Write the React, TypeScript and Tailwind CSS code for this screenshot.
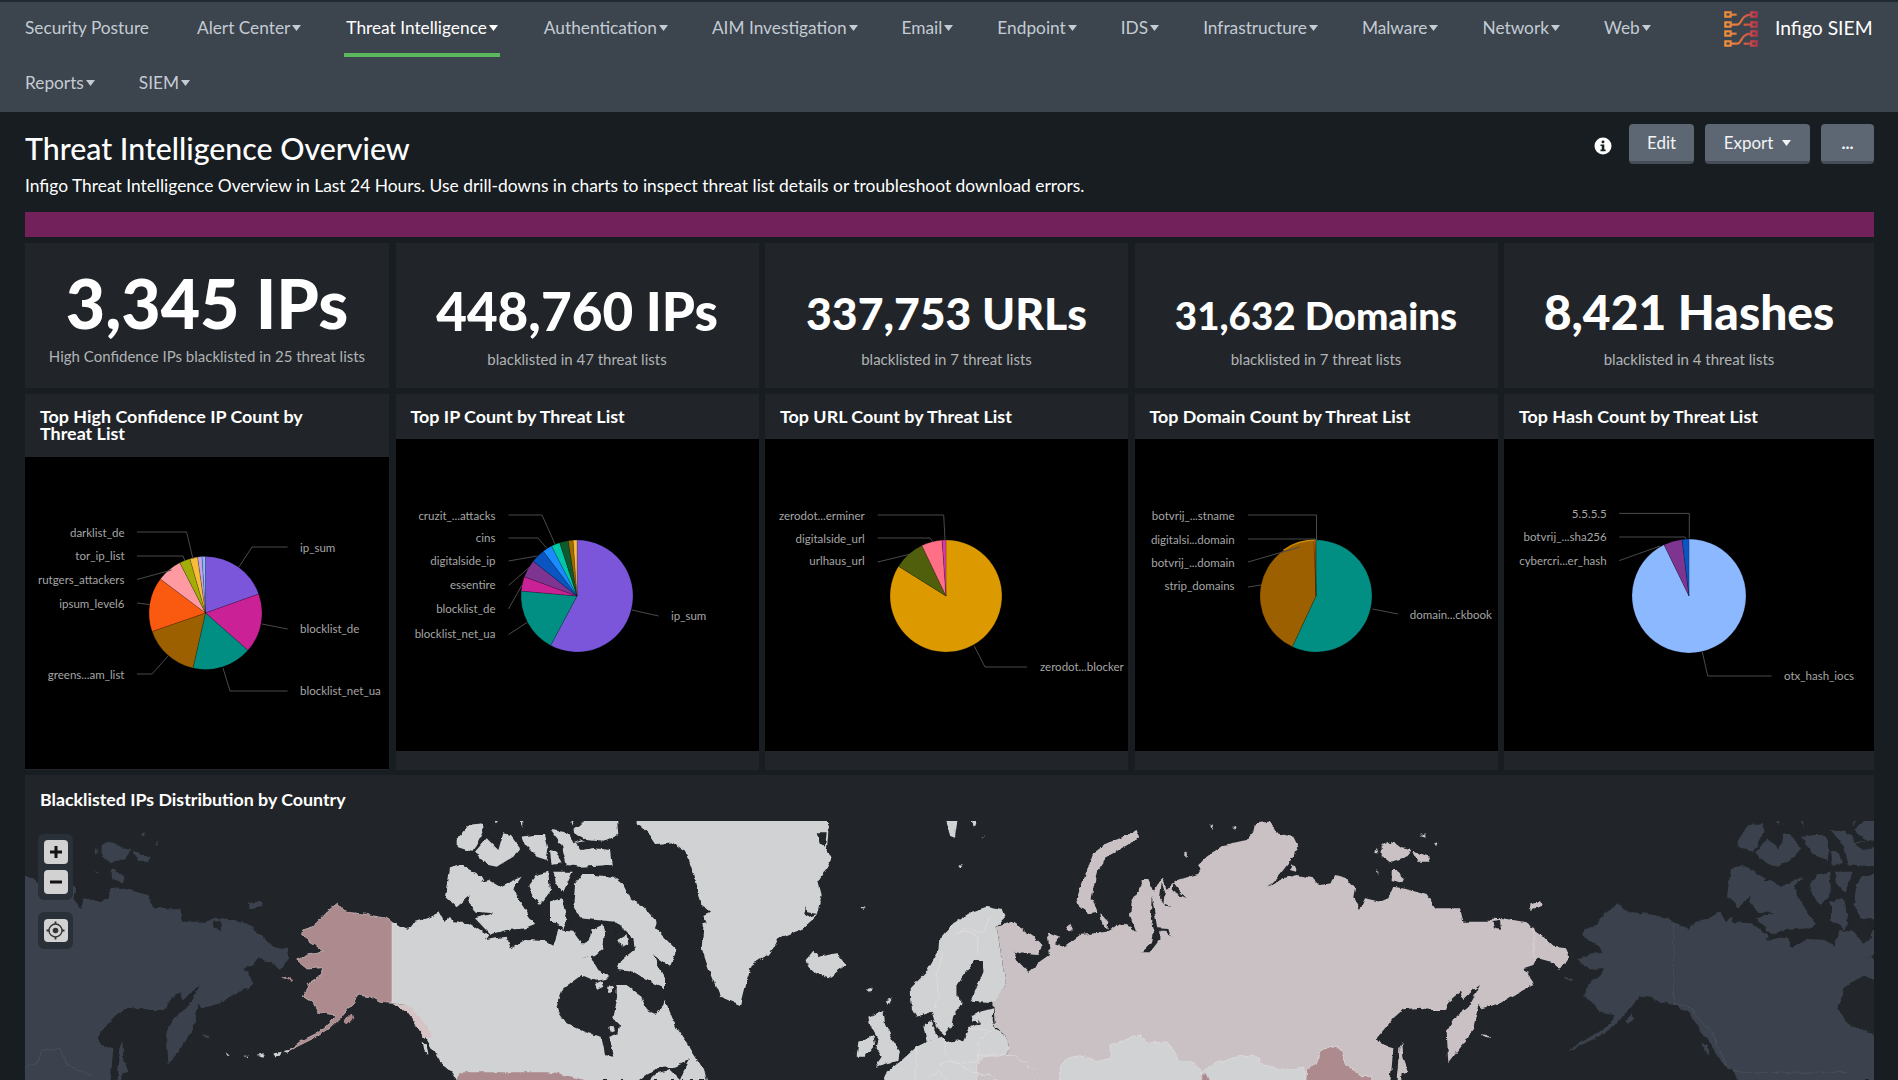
import React from "react";

const WATER = "#212529";
const PINK = "#ad8a8d";
const LIGHT = "#d1d2d3";
const RUS = "#c9c1c4";
const SLATE = "#3a434d";
const TEAL = "#008f82";

const navItems: { t: string; c?: boolean; a?: boolean }[] = [
  { t: "Security Posture" },
  { t: "Alert Center", c: true },
  { t: "Threat Intelligence", c: true, a: true },
  { t: "Authentication", c: true },
  { t: "AIM Investigation", c: true },
  { t: "Email", c: true },
  { t: "Endpoint", c: true },
  { t: "IDS", c: true },
  { t: "Infrastructure", c: true },
  { t: "Malware", c: true },
  { t: "Network", c: true },
  { t: "Web", c: true },
  { t: "Reports", c: true },
  { t: "SIEM", c: true },
];

function Caret({ cls = "" }: { cls?: string }) {
  return (
    <svg width="9" height="6" viewBox="0 0 9 6" className={cls}>
      <polygon points="0,0 9,0 4.5,6" fill="currentColor" />
    </svg>
  );
}

function Logo() {
  const rows = [0, 57];
  return (
    <svg width="36" height="38" viewBox="24 14 108 114">
      <defs>
        <linearGradient id="lg" gradientUnits="userSpaceOnUse" x1="30" y1="0" x2="126" y2="0">
          <stop offset="0" stopColor="#f0923a" />
          <stop offset="0.5" stopColor="#e0703f" />
          <stop offset="1" stopColor="#b8324f" />
        </linearGradient>
      </defs>
      {rows.map((d) => (
        <g key={d} transform={`translate(0 ${d})`} fill="none" stroke="url(#lg)" strokeWidth="6.5">
          <rect x="31" y="21" width="16" height="13" />
          <rect x="31" y="51" width="16" height="13" />
          <rect x="109" y="21" width="16" height="13" />
          <rect x="109" y="51" width="16" height="13" />
          <path d="M47 28 H65" />
          <path d="M47 58 H66 C82 58 76 28 109 28" />
          <path d="M86 58 H109" />
        </g>
      ))}
    </svg>
  );
}

function Nav() {
  return (
    <nav className="flex h-[112px] bg-[#3c444d] border-t-2 border-[#1f2a35]">
      <div className="flex flex-wrap content-start w-[1723px] pl-[3px]">
        {navItems.map((n) => (
          <div
            key={n.t}
            className={
              n.a
                ? "ml-[21px] mr-[22px] px-0.5 pt-[1px] h-[55px] flex items-center gap-[2px] text-[17.3px] text-white border-b-4 border-[#5cb85c]"
                : n.c
                  ? "mx-5 px-0.5 pt-[1px] h-[55px] flex items-center gap-[2px] text-[17.3px] text-[#c3cbd4] border-b-4 border-transparent"
                  : "ml-5 mr-6 px-0.5 pt-[1px] h-[55px] flex items-center gap-[2px] text-[17.3px] text-[#c3cbd4] border-b-4 border-transparent"
            }
          >
            <span>{n.t}</span>
            {n.c && <Caret />}
          </div>
        ))}
      </div>
      <div className="flex items-start pt-2 gap-4">
        <Logo />
        <span className="text-[19.3px] text-white mt-[4px] whitespace-nowrap">Infigo SIEM</span>
      </div>
    </nav>
  );
}

function Header() {
  return (
    <>
      <div className="flex justify-between pt-3 h-[52px]">
        <h1 className="text-[30.3px] font-medium text-white leading-[40px] pt-1">Threat Intelligence Overview</h1>
        <div className="flex items-start">
          <svg width="18" height="18" viewBox="0 0 18 18" className="mt-[13px] mr-[17px]">
            <circle cx="9" cy="9" r="8.5" fill="#fff" />
            <rect x="7.6" y="3.5" width="2.8" height="2.8" rx="1.2" fill="#171d21" />
            <path d="M6.5 7.5 H10.3 V12.6 H11.6 V14.2 H6.5 V12.6 H7.8 V9.1 H6.5 Z" fill="#171d21" />
          </svg>
          <button className="w-[65px] h-[40px] bg-[#5c6773] border-b-[3px] border-[#454d57] rounded-sm text-[17px] text-[#f2f4f5]">Edit</button>
          <button className="ml-[11px] w-[105px] h-[40px] bg-[#5c6773] border-b-[3px] border-[#454d57] rounded-sm text-[17px] text-[#f2f4f5] flex items-center justify-center gap-[9px]">
            Export <Caret />
          </button>
          <button className="ml-[11px] w-[53px] h-[40px] bg-[#5c6773] border-b-[3px] border-[#454d57] rounded-sm text-[17px] text-[#f2f4f5] font-bold">...</button>
        </div>
      </div>
      <p className="mt-[10px] text-[17.4px] leading-6 text-white whitespace-nowrap">
        Infigo Threat Intelligence Overview in Last 24 Hours. Use drill-downs in charts to inspect threat list details or troubleshoot download errors.
      </p>
      <div className="mt-[14px] h-[25px] bg-[#73215b]" />
    </>
  );
}

const kpis = [
  { n: "3,345 IPs", s: "High Confidence IPs blacklisted in 25 threat lists", c: "text-[68px] pt-[26px]", b: "pb-[22px]" },
  { n: "448,760 IPs", s: "blacklisted in 47 threat lists", c: "text-[53px] pt-[41px]", b: "pb-[19px]" },
  { n: "337,753 URLs", s: "blacklisted in 7 threat lists", c: "text-[44.5px] pt-[48px]", b: "pb-[19px]" },
  { n: "31,632 Domains", s: "blacklisted in 7 threat lists", c: "text-[38.5px] pt-[53px]", b: "pb-[19px]" },
  { n: "8,421 Hashes", s: "blacklisted in 4 threat lists", c: "text-[48px] pt-[45px]", b: "pb-[19px]" },
];

function arc(cx: number, cy: number, r: number, a0: number, a1: number) {
  const p = (a: number) => {
    const t = (a * Math.PI) / 180;
    return `${(cx + r * Math.sin(t)).toFixed(2)} ${(cy - r * Math.cos(t)).toFixed(2)}`;
  };
  return `M${cx} ${cy} L${p(a0)} A${r} ${r} 0 ${a1 - a0 > 180 ? 1 : 0} 1 ${p(a1)} Z`;
}

type Label = { t: string; x: number; y: number; a: "start" | "end" };
type Chart = {
  title: string;
  hdr: string;
  box: [number, number, number, number];
  c: [number, number, number];
  s: [number, string][];
  l: Label[];
  k: string[];
  extra?: boolean;
};

const charts: Chart[] = [
  {
    title: "Top High Confidence IP Count by Threat List",
    hdr: "h-[63px]",
    box: [25, 457, 364, 312],
    c: [205.5, 613, 56.5],
    s: [
      [70.3, "#7b56db"], [131.4, "#cb2196"], [192.8, TEAL], [251, "#9c6000"], [307, "#fa5a0f"],
      [333, "#ff9aa2"], [344, "#a4ad07"], [352, "#f7bc38"], [356.5, "#c1a4ea"], [360, "#8cb8ff"],
    ],
    l: [
      { t: "darklist_de", x: 124.5, y: 533, a: "end" },
      { t: "tor_ip_list", x: 124.5, y: 555.5, a: "end" },
      { t: "rutgers_attackers", x: 124.5, y: 579.5, a: "end" },
      { t: "ipsum_level6", x: 124.5, y: 603.5, a: "end" },
      { t: "greens...am_list", x: 124.5, y: 674.5, a: "end" },
      { t: "ip_sum", x: 300, y: 547.5, a: "start" },
      { t: "blocklist_de", x: 300, y: 628.5, a: "start" },
      { t: "blocklist_net_ua", x: 300, y: 690.5, a: "start" },
    ],
    k: [
      "137,532 186.6,532 193,559", "137,556 183,556 185,561", "137,579.5 171.6,570", "137,603 150,604.6",
      "137,674 152,674 168,656", "287.6,547 252,547 239,567", "287.6,629 262,624", "287.6,691 230,691 223,668",
    ],
  },
  {
    title: "Top IP Count by Threat List",
    hdr: "h-[45px]",
    box: [395, 439, 363, 312],
    c: [576, 596, 56],
    s: [
      [208, "#7b56db"], [275, TEAL], [290, "#cb2196"], [308.5, "#7e3592"], [323, "#0a55c0"],
      [333, "#1a8cff"], [342, "#00c8a8"], [351, "#0e5a2f"], [356, "#a36a00"], [360, "#f7bc38"],
    ],
    l: [
      { t: "cruzit_...attacks", x: 494.5, y: 515.5, a: "end" },
      { t: "cins", x: 494.5, y: 537.5, a: "end" },
      { t: "digitalside_ip", x: 494.5, y: 561, a: "end" },
      { t: "essentire", x: 494.5, y: 585, a: "end" },
      { t: "blocklist_de", x: 494.5, y: 609, a: "end" },
      { t: "blocklist_net_ua", x: 494.5, y: 634, a: "end" },
      { t: "ip_sum", x: 670, y: 615.7, a: "start" },
    ],
    k: [
      "507.5,515 541,515 554,544", "507.5,538 537,538 546,548.5", "507.5,561 536,556", "507.5,585.5 528,567.5",
      "507.5,609 521,585", "507.5,634.6 526,622.5", "657.7,616 631,610",
    ],
  },
  {
    title: "Top URL Count by Threat List",
    hdr: "h-[45px]",
    box: [765, 439, 363, 312],
    c: [946, 596, 56],
    s: [[302, "#dc9a00"], [334.5, "#4f5f0b"], [356, "#ff6f85"], [360, "#d63aa6"]],
    l: [
      { t: "zerodot...erminer", x: 864.8, y: 515.5, a: "end" },
      { t: "digitalside_url", x: 864.8, y: 538.5, a: "end" },
      { t: "urlhaus_url", x: 864.8, y: 561, a: "end" },
      { t: "zerodot...blocker", x: 1040, y: 666.6, a: "start" },
    ],
    k: ["877.7,515 943.7,515 945,540", "877.7,538 930,538 933,542", "877.7,562 910.7,554", "1027,667 985,667 974,645.6"],
  },
  {
    title: "Top Domain Count by Threat List",
    hdr: "h-[45px]",
    box: [1135, 439, 363, 312],
    c: [1316, 596, 56],
    s: [[205, TEAL], [358, "#9c6000"], [359, "#dc9a00"], [360, "#cc4a1a"]],
    l: [
      { t: "botvrij_...stname", x: 1234.6, y: 515.5, a: "end" },
      { t: "digitalsi...domain", x: 1234.6, y: 539.6, a: "end" },
      { t: "botvrij_...domain", x: 1234.6, y: 563, a: "end" },
      { t: "strip_domains", x: 1234.6, y: 586.4, a: "end" },
      { t: "domain...ckbook", x: 1409.8, y: 614.6, a: "start" },
    ],
    k: ["1248,515 1316.5,515 1316.5,540", "1248,539 1315,539 1315,541", "1248,562 1300,547", "1248,587 1261,585", "1398,614 1372.5,609"],
    extra: true,
  },
  {
    title: "Top Hash Count by Threat List",
    hdr: "h-[45px]",
    box: [1504, 439, 370, 312],
    c: [1689, 596, 57],
    s: [[334, "#8cb8ff"], [353, "#7e3592"], [360, "#0a55c0"]],
    l: [
      { t: "5.5.5.5", x: 1606.7, y: 514.4, a: "end" },
      { t: "botvrij_...sha256", x: 1606.7, y: 536.5, a: "end" },
      { t: "cybercri...er_hash", x: 1606.7, y: 561, a: "end" },
      { t: "otx_hash_iocs", x: 1784, y: 676, a: "start" },
    ],
    k: ["1619.3,513.4 1689.3,513.4 1689.3,538", "1619.3,537 1685,537 1686,539", "1619.3,560.6 1660,546", "1771.7,676 1707.7,676 1702.3,652"],
  },
];

function Pie({ ch }: { ch: Chart }) {
  const [x, y, w, h] = ch.box;
  const [cx, cy, r] = ch.c;
  let prev = 0;
  return (
    <svg viewBox={`${x} ${y} ${w} ${h}`} className="block w-full h-[312px] flex-none bg-black">
      {ch.s.map(([end, col]) => {
        const d = arc(cx, cy, r, prev, end);
        prev = end;
        return <path key={end} d={d} fill={col} stroke="#000" strokeOpacity="0.35" strokeWidth="0.5" />;
      })}
      {ch.extra && (
        <path d={`M${cx - 32.5} ${cy - 45.8} A56 56 0 0 1 ${cx} ${cy - 56}`} fill="none" stroke="#c98a00" strokeWidth="1.4" />
      )}
      {ch.k.map((k) => (
        <polyline key={k} points={k} fill="none" stroke="#4a4a4a" strokeWidth="1" />
      ))}
      {ch.l.map((l) => (
        <text key={l.t} x={l.x} y={l.y + 4} textAnchor={l.a} fontSize="11.5" fill="#a6a6a6">
          {l.t}
        </text>
      ))}
    </svg>
  );
}

function AmericaGroup({ land, ak, us, coast, line }: { land: string; ak: string; us: string; coast: string; line: string }) {
  return (
    <g>
      <polygon fill={ak} stroke={line} strokeWidth="2" points="172,265 190,285 215,293 260,298 320,310 337,322 337,565 300,562 270,545 235,540 215,570 190,600 150,640 110,665 60,690 20,710 60,680 110,655 150,625 165,600 115,592 100,565 70,545 85,505 125,480 125,458 85,462 50,435 85,420 130,410 100,385 65,362 68,345 100,335 135,295" />
      <polygon fill={ak} points="8,482 40,495 35,500 10,490" />
      <polygon fill={ak} points="190,620 215,595 220,610 200,630" />
      <polygon fill={land} points="337,322 385,342 400,322 440,310 478,292 495,322 510,305 520,322 570,325 625,360 615,375 680,365 692,400 740,372 790,375 820,392 835,345 880,350 905,385 925,380 935,345 970,330 1010,470 1040,510 1080,540 1105,590 1125,600 1155,555 1190,640 1225,690 1240,715 1275,770 1280,795 530,795 515,770 480,740 450,690 420,640 395,590 375,570 337,565" />
      <polygon fill={coast} points="337,565 375,570 395,578 425,615 452,650 450,670 430,665 405,625 380,590" />
      <polygon fill={land} points="425,680 440,690 445,720 430,705" />
      <polygon fill={WATER} points="830,575 850,520 905,480 925,475 950,497 985,490 1000,480 1010,515 1010,560 1000,610 1020,630 1015,655 985,665 1000,725 975,720 965,665 925,655 860,625 835,590" />
      <polygon fill={WATER} points="905,430 945,420 970,400 975,340 1010,320 1030,345 1060,375 1065,400 1025,440 1010,470 1050,475 1110,510 1155,520 1150,570 1125,600 1100,570 1080,530 1040,510 1010,510 985,480 950,470 930,425" />
      <polygon fill={land} points="915,440 930,422 955,465 985,482 945,497 905,480" />
      <polygon fill={land} points="945,510 965,500 970,512 950,522" />
      <polygon fill={land} points="985,515 1000,512 995,530 985,530" />
      <polygon fill={land} points="985,640 1000,632 1005,645 990,652" />
      <polygon fill={WATER} points="1080,795 1130,760 1185,755 1230,735 1210,770 1200,795 1170,765 1130,775 1110,795" />
      <polygon fill={us} points="537,772 825,772 860,782 915,795 915,840 530,840 530,795" />
      <polygon fill={WATER} points="880,350 905,385 915,385 935,340 920,320 885,310 870,340" />
      <polygon fill={land} points="905,180 940,180 1000,185 1030,210 1050,250 1090,275 1130,320 1125,340 1190,405 1170,455 1120,420 1155,490 1155,520 1110,500 1060,470 1010,465 1015,445 1065,405 1060,370 1010,320 950,315 900,310 880,270 885,210" />
      <polygon fill={WATER} points="1000,340 1020,330 1050,375 1040,395 1015,395" />
      <polygon fill={land} points="1015,375 1040,360 1045,385 1025,395" />
      <polygon fill={land} points="510,160 545,150 612,190 570,240 530,277 498,245" />
      <polygon fill={land} points="570,235 600,200 625,195 660,215 690,200 725,185 700,220 720,260 765,330 740,340 680,345 630,358 585,310 640,295 590,290 565,260" />
      <polygon fill={land} points="745,215 770,180 805,170 810,230 780,270 755,240" />
      <polygon fill={land} points="820,170 878,170 850,230 830,210" />
      <polygon fill={land} points="810,260 845,250 860,310 850,345 830,325 810,320" />
      <polygon fill={land} points="530,75 565,30 605,25 610,50 590,90 575,110 530,95" />
      <polygon fill={land} points="585,110 620,70 655,105 670,55 690,60 720,100 700,125 650,155 625,150 600,130" />
      <polygon fill={land} points="725,65 760,60 795,60 805,100 800,135 770,125 735,90" />
      <polygon fill={land} points="810,105 830,110 845,145 815,150" />
      <polygon fill={land} points="810,45 850,50 870,60 880,85 905,75 945,100 990,105 995,150 900,155 860,150 845,90" />
      <polygon fill={WATER} points="885,85 915,78 945,98 905,105" />
      <polygon fill={land} points="880,45 930,0 1010,0 1015,60 970,80 920,75 890,60" />
      <polygon fill={land} points="640,0 665,0 650,28" />
      <polygon fill={land} points="712,0 725,0 728,38" />
      <polygon fill={land} points="870,0 885,0 878,32" />
    </g>
  );
}

function RussiaGroup({ land, border, inner }: { land: string; border: string; inner?: { kz: string; mn: string } }) {
  return (
    <g>
      <polygon fill={land} points="-255,840 -250,770 -315,720 -345,720 -330,700 -345,660 -375,640 -380,565 -342,510 -355,430 -370,335 -325,320 -260,365 -235,390 -250,420 -300,415 -320,410 -305,440 -275,470 -245,445 -210,420 -215,375 -220,350 -180,365 -195,385 -170,395 -120,360 -40,350 0,325 30,335 50,355 30,300 35,260 65,210 65,195 85,195 100,230 115,205 130,190 140,225 160,205 175,195 240,175 235,150 260,125 310,90 380,75 400,50 405,25 450,20 470,55 520,65 535,95 520,125 490,165 470,190 445,215 490,190 530,180 580,190 600,210 635,205 645,180 680,190 705,220 700,250 720,282 735,250 780,260 805,250 820,215 870,225 920,240 945,280 1020,280 1030,320 1075,320 1110,320 1120,308 1150,310 1210,320 1265,360 1300,395 1340,400 1348,425 1320,465 1290,440 1250,430 1240,450 1210,460 1225,470 1240,510 1200,530 1140,565 1085,580 1075,570 1060,640 1035,680 985,745 980,650 1005,605 1050,570 1080,510 1060,525 1030,555 1020,530 985,560 975,585 930,585 900,578 850,583 820,610 770,670 785,690 820,700 808,840" />
      <polygon fill={land} points="838,700 847,680 850,730 865,770 845,775 840,840 826,840" />
      <polygon fill={WATER} points="95,245 105,300 112,340 145,342 152,365 138,350 118,350 118,375 90,412 65,412 95,385 103,350 93,300" />
      <polygon fill={WATER} points="125,205 135,230 130,265 155,275 135,272 120,250" />
      <polygon fill={WATER} points="160,205 175,225 200,250 180,240 155,225" />
      <polygon fill={WATER} points="470,190 490,170 525,175 500,172 480,195" />
      <polygon fill={WATER} points="1118,318 1140,315 1143,345 1122,340" />
      {[
        "-130,250 -100,170 -80,115 -40,85 0,70 50,45 57,65 25,90 -40,125 -70,170 -85,250 -65,290 -95,295 -125,270",
        "-165,335 -150,325 -140,345 -155,352",
        "-60,295 -35,320 -38,345 -55,320",
        "270,30 280,25 275,45",
        "340,35 352,32 345,45",
        "785,90 805,80 825,85 845,100 875,105 855,130 810,145 785,125",
        "880,110 930,125 925,140 895,140",
        "770,95 775,115 765,115",
        "900,60 915,55 917,65",
        "945,85 955,80 952,90",
        "815,165 825,165 855,190 850,205 815,195",
        "765,165 775,170 775,178",
        "1228,265 1260,258 1268,272 1228,285",
        "190,115 200,110 200,125 190,125",
        "515,150 530,155 528,170 510,165",
        "1085,658 1100,660 1112,672 1095,668",
      ].map((p) => (
        <polygon key={p} fill={land} points={p} />
      ))}
      {inner ? (
        <>
          <polygon fill={inner.kz} stroke={border} strokeWidth="2" points="-185,840 -180,755 -160,730 -120,722 -70,740 -30,730 -30,690 0,680 60,660 85,685 140,680 180,740 215,740 245,770 235,840" />
          <polygon fill={inner.kz} stroke={border} strokeWidth="2" points="245,770 285,745 370,720 410,725 430,750 500,765 555,755 555,840 285,840" />
          <polygon fill={inner.mn} stroke={border} strokeWidth="2" points="555,840 560,765 590,745 605,705 630,695 660,700 680,750 725,785 755,785 755,840" />
          <polygon fill={inner.mn} points="235,840 255,770 285,840" />
          <polyline fill="none" stroke={border} strokeWidth="2" points="1242,340 1242,430" />
        </>
      ) : (
        <polyline fill="none" stroke={border} strokeWidth="2" points="-180,760 -120,722 -70,740 -30,730 -30,690 0,680 60,660 85,685 140,680 180,740 245,770 370,720 430,750 500,765 555,755 590,745 605,705 660,700 680,750 755,785" />
      )}
    </g>
  );
}

function WorldMap() {
  const b = "#e6dfe1";
  return (
    <svg viewBox="25 821 1849 259" className="block w-full h-[259px]">
      <defs>
        <filter id="rough" filterUnits="userSpaceOnUse" x="-300" y="780" width="2400" height="340">
          <feTurbulence type="fractalNoise" baseFrequency="0.14" numOctaves="3" seed="4" result="n" />
          <feDisplacementMap in="SourceGraphic" in2="n" scale="4.5" xChannelSelector="R" yChannelSelector="G" />
        </filter>
      </defs>
      <g filter="url(#rough)">
        <g transform="translate(-160 815) scale(0.33333)">
          <RussiaGroup land={SLATE} border="#4d5660" />
        </g>
        <g transform="translate(280 815) scale(0.33333)">
          <AmericaGroup land={LIGHT} ak={PINK} us={PINK} coast="#d5c3c6" line="#d9c9ca" />
          <g fill={LIGHT}>
            <polygon points="-160,712 -148,722 -155,722" />
            <polygon points="-110,722 -95,722 -100,728" />
            <polygon points="-70,722 -45,718 -50,728" />
            <polygon points="-20,716 5,710 0,722 -15,724" />
            <polygon points="10,712 30,706 22,716" />
          </g>
        </g>
        <g transform="translate(700 815) scale(0.33333)">
          <polygon fill={LIGHT} points="-190,25 -150,60 -130,90 -80,85 -40,110 -20,180 0,260 0,300 10,340 5,400 25,460 60,545 120,570 135,510 155,450 210,415 235,370 300,345 350,300 365,240 355,200 385,150 395,125 380,110 387,30 365,0 -190,0" />
          <polygon fill={WATER} points="350,55 380,55 375,95 360,85" />
          <polygon fill={WATER} points="315,272 322,292 352,297 325,306 310,296" />
          <polygon fill={WATER} points="-5,262 30,290 10,300 20,325 -5,330" />
          <polygon fill={LIGHT} points="320,435 340,410 355,425 410,415 438,450 385,490 345,475 325,455" />
          {[
            "485,280 497,272 490,285",
            "500,520 515,515 510,535",
            "560,555 575,550 565,570",
            "730,0 775,0 765,65 750,60",
            "800,0 838,0 825,35",
            "850,65 855,60 848,72",
            "778,150 790,152 784,162",
            "505,605 550,585 555,625 575,670 600,710 595,735 525,755 545,725 530,700 535,675 510,630",
            "475,680 520,660 525,690 495,725 470,725",
            "718,372 760,325 815,290 860,275 905,285 915,310 890,335 905,430 918,510 885,560 830,575 810,560 850,470 848,435 825,435 770,510 770,545 790,565 760,600 755,630 735,660 710,640 695,590 650,605 635,580 632,520 680,470 715,410",
            "670,630 695,615 705,645 715,670 680,680",
            "530,840 560,770 600,740 650,695 680,680 725,665 740,680 800,650 810,615 840,590 880,580 878,615 885,645 915,660 930,700 915,720 950,720 1010,770 1005,840",
          ].map((p) => (
            <polygon key={p} fill={LIGHT} points={p} />
          ))}
          <polygon fill={WATER} points="825,435 848,435 850,470 812,560 889,565 850,580 825,590 840,625 805,640 790,675 740,680 730,665 760,640 765,600 790,565 770,545 770,510" />
          <polygon fill={LIGHT} points="815,600 838,592 835,622 820,620" />
          <polygon fill={RUS} points="830,755 850,725 945,720 975,745 1010,770 1005,840 830,840" stroke={b} strokeWidth="2" />
          <g fill="none" stroke={b} strokeWidth="2">
            <polyline points="730,410 710,480 715,540 705,580" />
            <polyline points="780,345 830,360 835,420" />
            <polyline points="760,360 800,340 850,350 870,310" />
            <polyline points="650,695 645,795" />
            <polyline points="735,680 735,720 770,745 830,740 840,700 830,680" />
            <polyline points="835,720 915,720" />
            <polyline points="835,680 865,650 885,645" />
            <polyline points="805,640 860,645" />
            <polyline points="715,750 760,735 810,770 870,780 895,795" />
            <polyline points="680,790 715,770 740,795" />
          </g>
        </g>
        <g transform="translate(1120 815) scale(0.33333)">
          <RussiaGroup land={RUS} border={b} inner={{ kz: LIGHT, mn: PINK }} />
        </g>
        <g transform="translate(1561 815) scale(0.33333)">
          <AmericaGroup land={SLATE} ak={SLATE} us={SLATE} coast={SLATE} line={SLATE} />
          <polyline fill="none" stroke="#4d5660" strokeWidth="2" points="337,322 337,565 375,570 452,650 500,760 537,772 860,772" />
        </g>
      </g>
      <rect x="392.9" y="923" width="4" height="80" fill={LIGHT} />
      <rect x="388" y="925" width="4" height="76" fill={PINK} />
      <line x1="392.3" y1="923" x2="392.3" y2="1003" stroke="#dcd6d7" strokeWidth="1.2" />
    </svg>
  );
}

function MapControls() {
  return (
    <div className="absolute left-[13px] top-[59px] flex flex-col gap-3">
      <div className="w-[35px] h-[66px] rounded-md bg-[#2a3037] flex flex-col items-center justify-center gap-[6px]">
        <div className="w-6 h-6 rounded bg-[#d2d2d2] flex items-center justify-center">
          <svg width="12" height="12" viewBox="0 0 12 12"><path d="M4.5 0 H7.5 V4.5 H12 V7.5 H7.5 V12 H4.5 V7.5 H0 V4.5 H4.5 Z" fill="#111" /></svg>
        </div>
        <div className="w-6 h-6 rounded bg-[#d2d2d2] flex items-center justify-center">
          <svg width="12" height="12" viewBox="0 0 12 12"><rect x="0" y="4.5" width="12" height="3" fill="#111" /></svg>
        </div>
      </div>
      <div className="w-[35px] h-[37px] rounded-md bg-[#2a3037] flex items-center justify-center">
        <div className="w-6 h-[23px] rounded bg-[#d2d2d2] flex items-center justify-center">
          <svg width="19" height="19" viewBox="0 0 19 19" fill="none" stroke="#333" strokeWidth="1.4">
            <circle cx="9.5" cy="9.5" r="6.5" />
            <circle cx="9.5" cy="9.5" r="2.8" fill="#333" stroke="none" />
            <path d="M9.5 0.5 V3 M9.5 16 V18.5 M0.5 9.5 H3 M16 9.5 H18.5" strokeWidth="1.8" />
          </svg>
        </div>
      </div>
    </div>
  );
}

export default function App() {
  return (
    <div className="w-[1898px] h-[1080px] overflow-hidden bg-[#171d21] [font-family:Lato,'Liberation_Sans',sans-serif]">
      <Nav />
      <main className="pl-[25px] pr-[24px]">
        <Header />
        <div className="mt-[6px] grid grid-cols-[364px_363px_363px_363px_370px] gap-x-[6.5px] gap-y-[6px]">
          {kpis.map((k) => (
            <div key={k.n} className={`h-[145px] flex flex-col items-center bg-[#212529] ${k.b}`}>
              <div className={`font-black leading-none text-white whitespace-nowrap ${k.c}`}>{k.n}</div>
              <div className="mt-auto text-[15px] leading-5 text-[#b0b3b5] whitespace-nowrap">{k.s}</div>
            </div>
          ))}
          {charts.map((c) => (
            <div key={c.title} className="h-[376px] bg-[#212529] flex flex-col">
              <div className={`flex-none px-[15px] pt-[14px] text-[17.9px] leading-[17px] font-bold text-white ${c.hdr}`}>
                <div className="max-w-[300px]">{c.title}</div>
              </div>
              <Pie ch={c} />
            </div>
          ))}
        </div>
        <section className="relative mt-[5px] h-[305px] bg-[#212529] overflow-hidden">
          <div className="h-[46px] px-[15px] pt-[16px] text-[17.8px] leading-[17px] font-bold text-white">Blacklisted IPs Distribution by Country</div>
          <WorldMap />
          <MapControls />
        </section>
      </main>
    </div>
  );
}
